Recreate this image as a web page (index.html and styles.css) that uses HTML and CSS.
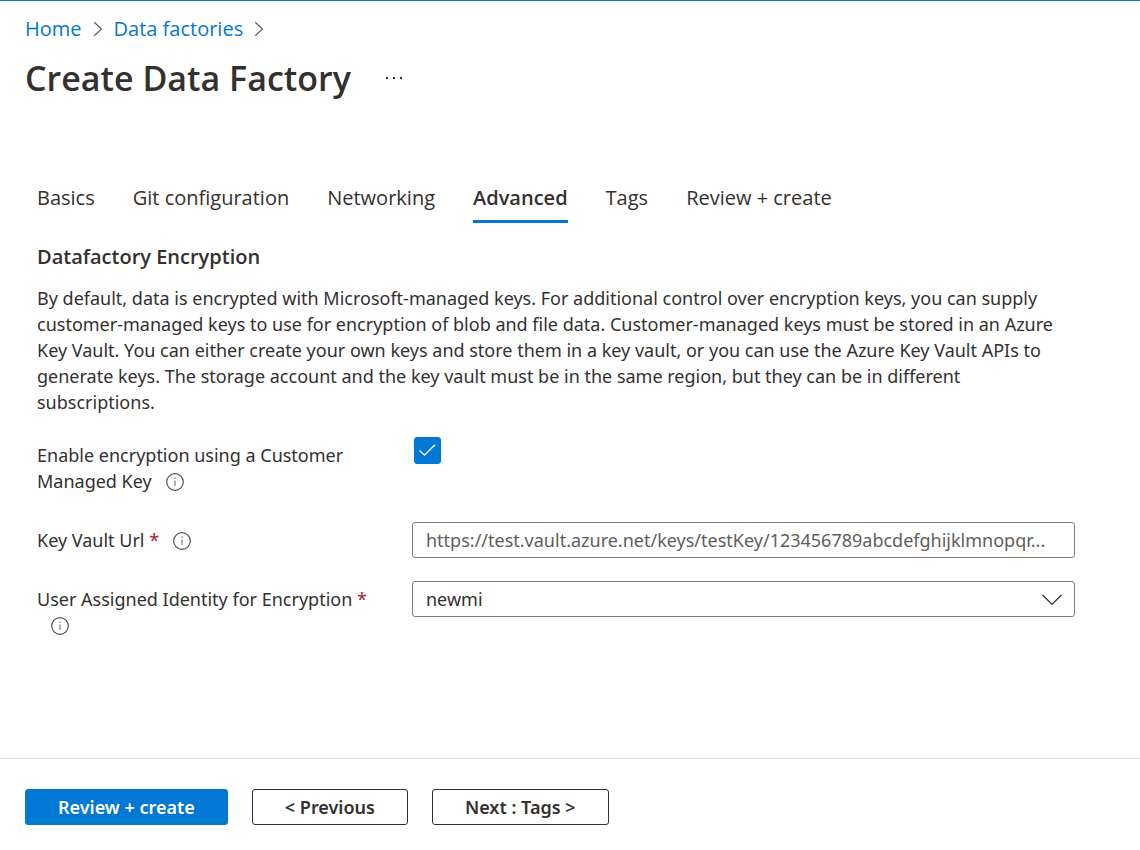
FILE: index.html
```html
<!DOCTYPE html>
<html lang="en">
<head>
<meta charset="utf-8">
<meta name="viewport" content="width=device-width, initial-scale=1">
<title>Create Data Factory</title>
<link rel="stylesheet" href="styles.css">
</head>
<body>
<svg class="sprite" aria-hidden="true">
  <symbol id="info" viewBox="0 0 18 18">
    <circle cx="9" cy="9" r="8.3" fill="none" stroke="#55534f" stroke-width="1.2"/>
    <path d="M9 7.5v5.5M9 4.6v1.5" stroke="#8a8886" stroke-width="1.3"/>
  </symbol>
  <symbol id="next" viewBox="0 0 10 16">
    <path d="M1.2 1.2 8.500 8l-7.300 6.800" fill="none" stroke="#605e5c" stroke-width="1.2"/>
  </symbol>
</svg>
<header class="page-header">
  <nav class="breadcrumb" aria-label="Breadcrumb">
    <a href="#home">Home</a>
    <svg class="crumb-arrow" aria-hidden="true"><use href="#next"/></svg>
    <a href="#factories">Data factories</a>
    <svg class="crumb-arrow" aria-hidden="true"><use href="#next"/></svg>
  </nav>
  <div class="title-row">
    <h1 class="title">Create Data Factory</h1>
    <button class="more" type="button" aria-label="More actions">
      <svg class="more-icon" viewBox="0 0 18 4" aria-hidden="true"><path d="M1 1h2v2H1zM8 1h2v2H8zM15 1h2v2h-2z" fill="#323130"/></svg>
    </button>
  </div>
</header>
<main class="content">
  <nav class="tabs" aria-label="Steps">
    <a class="tab" href="#basics">Basics</a>
    <a class="tab" href="#git">Git configuration</a>
    <a class="tab" href="#networking">Networking</a>
    <a class="tab tab-active" href="#advanced" aria-current="page">Advanced</a>
    <a class="tab" href="#tags">Tags</a>
    <a class="tab" href="#review">Review + create</a>
  </nav>
  <h2 class="section-title">Datafactory Encryption</h2>
  <p class="description">By default, data is encrypted with Microsoft-managed keys. For additional control over encryption keys, you can supply customer-managed keys to use for encryption of blob and file data. Customer-managed keys must be stored in an Azure Key Vault. You can either create your own keys and store them in a key vault, or you can use the Azure Key Vault APIs to generate keys. The storage account and the key vault must be in the same region, but they can be in different subscriptions.</p>
  <form class="form" id="encryption">
    <div class="row row-check">
      <label class="label" for="enable">Enable encryption using a Customer Managed Key<svg class="info" aria-hidden="true"><use href="#info"/></svg></label>
      <div class="check">
        <input class="check-box" id="enable" type="checkbox" checked>
        <svg class="check-mark" viewBox="0 0 27 27" aria-hidden="true"><path d="M5.500 13.500 10.500 18.200 21 7.700" fill="none" stroke="#fff" stroke-width="1.3"/></svg>
      </div>
    </div>
    <div class="row">
      <label class="label" for="url">Key Vault Url <span class="required">*</span><svg class="info" aria-hidden="true"><use href="#info"/></svg></label>
      <input class="field" id="url" type="text" placeholder="https://test.vault.azure.net/keys/testKey/123456789abcdefghijklmnopqr...">
    </div>
    <div class="row">
      <label class="label" for="identity">User Assigned Identity for Encryption <span class="required">*</span><svg class="info" aria-hidden="true"><use href="#info"/></svg></label>
      <div class="select">
        <select class="field" id="identity"><option>newmi</option></select>
        <svg class="select-arrow" viewBox="0 0 20 12" aria-hidden="true"><path d="M.6 1 10 10.400 19.400 1" fill="none" stroke="#323130" stroke-width="1.3"/></svg>
      </div>
    </div>
  </form>
</main>
<footer class="footer">
  <button class="button button-primary" type="submit" form="encryption">Review + create</button>
  <button class="button" type="button">&lt; Previous</button>
  <button class="button" type="button">Next : Tags &gt;</button>
</footer>
</body>
</html>
```

FILE: styles.css
```css
* {
  box-sizing: border-box;
}

body {
  display: flex;
  flex-direction: column;
  min-height: 100vh;
  margin: 0;
  border-top: 1px solid #0078d4;
  background: #fff;
  color: #323130;
  font-family: "Noto Sans", "Open Sans", sans-serif;
  font-size: 18px;
  line-height: 26px;
}

button,
input,
select {
  margin: 0;
  color: inherit;
  font: inherit;
}

.sprite {
  position: absolute;
  width: 0;
  height: 0;
}

.page-header,
.tabs,
.section-title {
  font-family: "Open Sans", "Noto Sans", sans-serif;
}

.page-header {
  padding: 15px 25px 0;
}

.breadcrumb {
  display: flex;
  align-items: center;
  gap: 11px;
  font-size: 20px;
}

.breadcrumb a {
  color: #0078d4;
  text-decoration: none;
}

.crumb-arrow {
  width: 10px;
  height: 16px;
}

.title-row {
  display: flex;
  align-items: center;
  gap: 26px;
  margin-top: 12px;
}

.title {
  margin: 0;
  font-size: 34px;
  font-weight: 600;
  line-height: 48px;
}

.more {
  display: flex;
  padding: 8px;
  border: 0;
  background: none;
}

.more-icon {
  width: 18px;
  height: 4px;
}

.content {
  flex: 1;
  padding: 80px 65px 32px 37px;
}

.tabs {
  display: flex;
  flex-wrap: wrap;
  gap: 38px;
  font-size: 20px;
}

.tab {
  padding: 3px 0 9px;
  border-bottom: 3px solid transparent;
  color: inherit;
  text-decoration: none;
}

.tab-active {
  border-color: #0078d4;
  font-weight: 600;
}

.section-title {
  margin: 21px 0 0;
  font-size: 20px;
  font-weight: 600;
}

.description {
  margin: 15px 0 0;
}

.form {
  display: grid;
  gap: 23px;
  margin-top: 22px;
}

.row {
  display: grid;
  grid-template-columns: 340px minmax(0, 1fr);
  column-gap: 35px;
  align-items: start;
}

.row-check {
  padding-bottom: 5px;
}

.label {
  padding-top: 5px;
}

.required {
  color: #a4262c;
}

.info {
  width: 18px;
  height: 18px;
  margin-left: 14px;
  vertical-align: -3px;
}

.check {
  position: relative;
  width: 27px;
  height: 27px;
  margin-left: 2px;
}

.check-box {
  display: block;
  width: 27px;
  height: 27px;
  border: 1px solid #605e5c;
  border-radius: 3px;
  appearance: none;
}

.check-box:checked {
  border-color: #0078d4;
  background: #0078d4;
}

.check-mark {
  position: absolute;
  inset: 0;
  pointer-events: none;
}

.field {
  display: block;
  width: 100%;
  height: 36px;
  padding: 0 13px;
  border: 1px solid #7f7d7b;
  border-radius: 3px;
  background: #fff;
  appearance: none;
}

.field::placeholder {
  color: #605e5c;
  opacity: 1;
}

.select {
  position: relative;
}

.select-arrow {
  position: absolute;
  top: 13px;
  right: 13px;
  width: 20px;
  height: 12px;
  pointer-events: none;
}

.footer {
  display: flex;
  flex-wrap: wrap;
  gap: 24px;
  padding: 30px 25px 25px;
  border-top: 1px solid #dddcdb;
}

.button {
  height: 36px;
  padding: 0 32px;
  border: 1px solid #323130;
  border-radius: 3px;
  background: #fff;
  font-weight: 600;
  line-height: 26px;
}

.button-primary {
  border-color: #0078d4;
  background: #0078d4;
  color: #fff;
}
```
